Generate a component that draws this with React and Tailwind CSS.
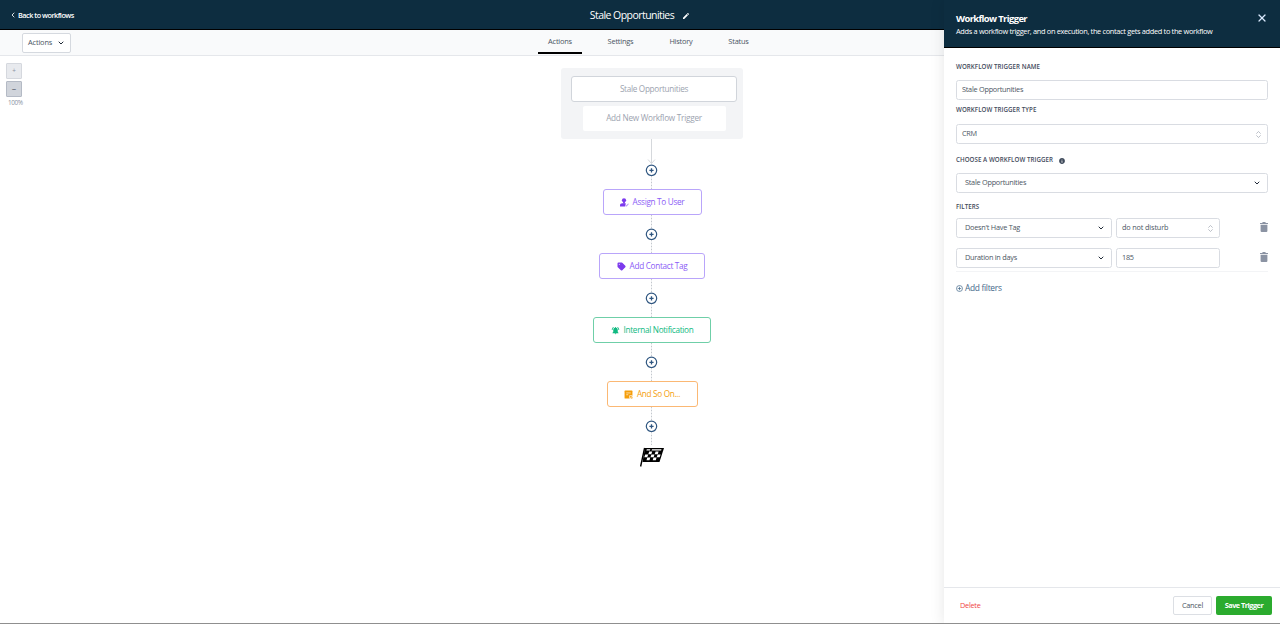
import clsx from 'clsx';
import { ChevronDown, ChevronLeft, ChevronsUpDown, X } from 'lucide-react';
import { MdEdit, MdNotificationsActive } from 'react-icons/md';
import { FaInfoCircle } from 'react-icons/fa';

const TABS = [
  { label: 'Actions', width: 'w-[44px]', active: true },
  { label: 'Settings', width: 'w-[77px]' },
  { label: 'History', width: 'w-[44px]' },
  { label: 'Status', width: 'w-[71px]' },
];

const UserIcon = ({ className }) => (
  <svg viewBox="0 0 18 18" className={className} fill="currentColor">
    <circle cx="8" cy="4.6" r="4.2" />
    <path d="M6.2 8h3.6v3H6.2z" />
    <path d="M0 17v-2.5C0 12 2 10.6 4.5 10.6h7L10.5 17z" />
    <path d="M12 17v-1.8l4.4-4.4 1.4 1.4-4.4 4.8z" opacity="0.55" />
  </svg>
);

const TagIcon = ({ className }) => (
  <svg viewBox="0 0 18 18" className={className}>
    <path d="M1 3a2 2 0 0 1 2-2h6.2a2 2 0 0 1 1.4.6l6 6a2 2 0 0 1 0 2.8l-6 6a2 2 0 0 1-2.8 0L1.6 10.6A2 2 0 0 1 1 9.2z" fill="currentColor" />
    <circle cx="4.6" cy="4.6" r="1" fill="#fff" />
  </svg>
);

const NoteIcon = ({ className }) => (
  <svg viewBox="0 0 16 16" className={className}>
    <path d="M2 1h12a1 1 0 0 1 1 1v8l-5 5H2a1 1 0 0 1-1-1V2a1 1 0 0 1 1-1z" fill="currentColor" />
    <path d="M4 5.2h8M4 8.4h3.5" stroke="#fff" strokeWidth="1.1" />
    <path d="M10 15v-5h5" fill="none" stroke="#fff" strokeWidth="1.2" />
    <path d="M11.5 15 15 11.5V14a1 1 0 0 1-1 1z" fill="currentColor" />
  </svg>
);

const STEPS = [
  { label: 'Assign To User', icon: UserIcon, style: 'w-[99px] border-[#b9a5fa] text-[#8b5cf6]', iconColor: 'text-[#7c3aed]' },
  { label: 'Add Contact Tag', icon: TagIcon, style: 'w-[106px] border-[#b9a5fa] text-[#8b5cf6]', iconColor: 'text-[#7c3aed]' },
  { label: 'Internal Notification', icon: MdNotificationsActive, style: 'w-[118px] border-[#6fcfa8] text-[#10b981]', iconColor: 'text-[#10b981]' },
  { label: 'And So On...', icon: NoteIcon, style: 'w-[91px] border-[#fbb874] text-[#f59e0b]', iconColor: 'text-[#f59e0b]' },
];

const AddStep = () => (
  <svg viewBox="0 0 13 12" className="mr-px block h-[12px] w-[13px] shrink-0 text-[#2f5680]" fill="none" stroke="currentColor">
    <circle cx="6.5" cy="6.3" r="5.2" strokeWidth="1.2" />
    <path d="M6.5 4.2v4.2M4.4 6.3h4.2" strokeWidth="1.3" />
  </svg>
);

const Dots = () => (
  <div className="mr-px h-[13px] w-px shrink-0 bg-[repeating-linear-gradient(to_bottom,#c3c7cd_0_1px,#eceef0_1px_3px)]" />
);

const Arrow = () => (
  <svg viewBox="0 0 9 25" className="mr-px block h-[25px] w-[9px] shrink-0" fill="none" stroke="#d5d8dc">
    <path d="M4.5 0v24.5M1 20.5l3.5 4 3.5-4" />
  </svg>
);

const FinishFlag = () => (
  <svg viewBox="0 0 24 20" className="mt-[2px] block h-[20px] w-[24px]">
    <path d="M5 1h19l-4.5 14H2.5z" fill="#000" />
    <path d="M4.6 1 .6 19.5" stroke="#000" strokeWidth="1.4" />
    <g fill="#fff">
      <path d="M6.8 2.2h3.5l-.4 1.2H6.400zM12 2.2h9.5l-.4 1.2H11.600z" />
      <path d="M9.200 4.400h3l-.9 2.800h-3zM15.600 4.400h3l-.9 2.800h-3z" />
      <path d="M5.200 7.400h3l-.9 2.800h-3zM11.400 7.400h3.100l-.9 2.800h-3.100zM17.600 7.400h3l-.9 2.800h-3z" />
      <path d="M7.300 10.400h3l-.8 2.900h-3zM13.500 10.400h3.100l-.8 2.900h-3.100z" />
    </g>
  </svg>
);

const TrashIcon = () => (
  <svg viewBox="0 0 8 10" className="block h-[10px] w-[8px] text-[#8b93a3]" fill="currentColor">
    <path d="M2.7 0h2.6l.5.9H8v1.1H0V.9h2.2z" />
    <path d="M.6 2.7h6.8V9a1 1 0 0 1-1 1H1.6a1 1 0 0 1-1-1z" />
  </svg>
);

const Label = ({ children, className }) => (
  <div className={clsx('flex h-[10px] items-center pt-px text-[6.2px] leading-none font-semibold tracking-[0.05px] text-[#3f4a5b]', className)}>
    {children}
  </div>
);

const Field = ({ children, icon: Icon, iconClass, className }) => (
  <div className={clsx('flex h-[20px] items-center justify-between rounded-[2.5px] border border-[#d9dce2] bg-white text-[7.3px] leading-none tracking-[-0.25px] text-[#4b5563]', className)}>
    <span>{children}</span>
    {Icon && <Icon className={iconClass} />}
  </div>
);

const chevron = 'size-[8px] text-[#1f2937] stroke-[3]';
const updown = 'size-[9px] text-[#9ca3af] stroke-[1.8]';

const TriggerPanel = () => (
  <aside className="absolute inset-y-0 right-0 flex w-[336px] flex-col bg-white shadow-[0_0_14px_rgba(0,0,0,0.1)]">
    <div className="flex h-[48px] shrink-0 justify-between border-b border-black bg-[#0d2d40] pt-[12px] pr-[12px] pl-[12px] text-white">
      <div>
        <h2 className="text-[9.4px] leading-[13px] font-bold tracking-[-0.6px]">Workflow Trigger</h2>
        <p className="mt-[2px] text-[7.4px] leading-[9px] font-medium tracking-[-0.33px]">
          Adds a workflow trigger, and on execution, the contact gets added to the workflow
        </p>
      </div>
      <X className="size-[12px] text-[#dbeafe]" strokeWidth={2.4} />
    </div>

    <div className="flex-1 pr-[12px] pl-[12px]">
      <Label className="mt-[14px]">WORKFLOW TRIGGER NAME</Label>
      <Field className="mt-[8px] px-[5px]">Stale Opportunities</Field>
      <Label className="mt-[5px]">WORKFLOW TRIGGER TYPE</Label>
      <Field className="mt-[9px] pr-[4px] pl-[5px]" icon={ChevronsUpDown} iconClass={updown}>CRM</Field>
      <Label className="mt-[11px]">
        CHOOSE A WORKFLOW TRIGGER
        <FaInfoCircle className="ml-[6px] size-[6px]" />
      </Label>
      <Field className="mt-[8px] pr-[6px] pl-[8px]" icon={ChevronDown} iconClass={chevron}>Stale Opportunities</Field>

      {/* Filters */}
      <div className="border-b border-[#f3f4f6] pb-[3px]">
        <Label className="mt-[9px]">FILTERS</Label>
        <div className="mt-[6px] flex items-center">
          <Field className="w-[156px] pr-[6px] pl-[8px]" icon={ChevronDown} iconClass={chevron}>Doesn't Have Tag</Field>
          <Field className="ml-[4px] w-[104px] pr-[4px] pl-[5px]" icon={ChevronsUpDown} iconClass={updown}>
            <span className="tracking-[-0.15px]">do not disturb</span>
          </Field>
          <div className="ml-auto pb-[2px]"><TrashIcon /></div>
        </div>
        <div className="mt-[10px] flex items-center">
          <Field className="w-[156px] pr-[6px] pl-[8px]" icon={ChevronDown} iconClass={chevron}>Duration in days</Field>
          <Field className="ml-[4px] w-[104px] px-[5px]">185</Field>
          <div className="ml-auto pb-[2px]"><TrashIcon /></div>
        </div>
      </div>
      <button className="mt-[11px] flex items-center text-[8.4px] leading-[10px] tracking-[-0.3px] text-[#44688a]">
        <svg viewBox="0 0 8 8" className="mr-[2px] size-[7px]" fill="none" stroke="currentColor" strokeWidth="0.8">
          <circle cx="4" cy="4" r="3.4" />
          <path d="M4 2v4M2 4h4" />
        </svg>
        Add filters
      </button>
    </div>

    <div className="flex h-[37px] shrink-0 items-center border-t border-[#e5e7eb] pr-[8px] pb-px pl-[16px] text-[7.3px] leading-none tracking-[-0.25px]">
      <button className="text-[#ef4444]">Delete</button>
      <button className="ml-auto h-[19px] w-[39px] rounded-[2px] border border-[#dcdfe4] font-medium text-[#4b5563]">Cancel</button>
      <button className="ml-[4px] h-[19px] w-[56px] rounded-[2px] bg-[#2bab2e] font-bold tracking-[-0.5px] text-white">Save Trigger</button>
    </div>
  </aside>
);

const App = () => (
  <div className="relative flex h-[624px] w-[1280px] flex-col overflow-hidden bg-white font-['Open_Sans','Noto_Sans',sans-serif]">
    {/* Top bar */}
    <header className="grid h-[30px] shrink-0 grid-cols-3 items-center border-b border-black bg-[#0d2d40] text-white">
      <button className="flex items-center pt-px pl-[9px] text-[7.3px] font-semibold tracking-[-0.5px]">
        <ChevronLeft className="mr-[1px] size-[8px]" strokeWidth={2.5} />
        Back to workflows
      </button>
      <div className="flex items-center justify-center pt-[2px] text-[10.5px] font-medium tracking-[-0.55px]">
        Stale Opportunities
        <MdEdit className="ml-[8px] size-[8px]" />
      </div>
    </header>

    {/* Toolbar */}
    <div className="flex h-[26px] shrink-0 items-start border-b border-[#e5e7eb] bg-[#f9fafb]">
      <button className="mt-[3px] ml-[22px] flex h-[20px] w-[49px] items-center justify-between rounded-[2px] border border-[#d5d9df] bg-white pr-[5px] pl-[5px] text-[7.4px] font-medium tracking-[-0.15px] text-[#4b5563]">
        Actions
        <ChevronDown className={chevron} />
      </button>
      <nav className="ml-[467px] flex h-[25px] text-[7.4px] font-medium tracking-[-0.2px] text-[#4b5563]">
        {TABS.map((tab) => (
          <div key={tab.label} className={clsx('flex h-[24px] items-center justify-center border-b-2 pt-[2px]', tab.width, tab.active ? 'border-black' : 'border-transparent')}>
            {tab.label}
          </div>
        ))}
      </nav>
    </div>

    <main className="flex flex-1">
      {/* Zoom controls */}
      <div className="flex w-[24px] shrink-0 flex-col pt-[7px] pl-[6px] text-[6.4px] leading-none text-[#8b93a3]">
        <div className="flex size-[16px] items-center justify-center rounded-[1px] border border-[#d5d8de] bg-[#e8eaee]">+</div>
        <div className="mt-[2px] flex size-[16px] items-center justify-center rounded-[1px] border border-[#b4bac5] bg-[#d0d4db] text-[8px] text-[#374151]">−</div>
        <div className="mt-[3px] ml-[2px] tracking-[-0.4px]">100%</div>
      </div>

      <div className="flex flex-1 flex-col items-center pt-[12px]">
        <div className="flex h-[71px] w-[182px] shrink-0 flex-col items-center rounded-[3px] bg-[#f3f4f6] pt-[8px] pl-[4px] text-[8.2px] tracking-[-0.3px] text-[#9ca3af]">
          <div className="flex h-[26px] w-[166px] items-center justify-center rounded-[3px] border border-[#d1d5db] bg-white pt-px">Stale Opportunities</div>
          <div className="mt-[4px] flex h-[25px] w-[143px] items-center justify-center rounded-[2px] bg-white tracking-[-0.25px]">Add New Workflow Trigger</div>
        </div>
        <Arrow />
        <AddStep />
        {STEPS.map(({ label, icon: Icon, style, iconColor }) => (
          <div key={label} className="flex flex-col items-center">
            <Dots />
            <div className={clsx('flex h-[26px] items-center justify-center rounded-[3px] border bg-white pt-px text-[8.2px] tracking-[-0.3px]', style)}>
              <Icon className={clsx('mr-[4px] size-[9px]', iconColor)} />
              {label}
            </div>
            <Dots />
            <AddStep />
          </div>
        ))}
        <Dots />
        <FinishFlag />
      </div>
    </main>

    <TriggerPanel />
    <div className="absolute inset-x-0 bottom-0 h-px bg-[#8f8f8f]" />
  </div>
);

export default App;
